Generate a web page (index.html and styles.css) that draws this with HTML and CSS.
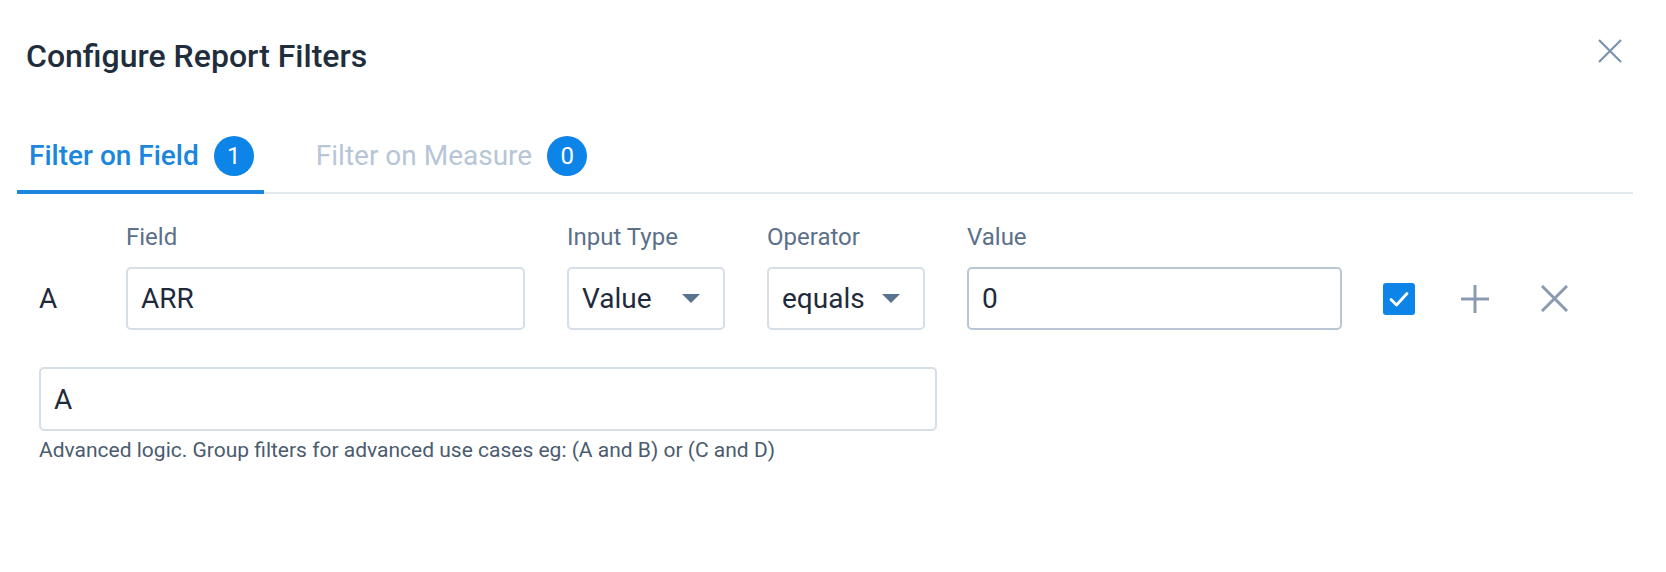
FILE: index.html
```html
<!DOCTYPE html>
<html lang="en">
<head>
<meta charset="utf-8">
<title>Configure Report Filters</title>
<link rel="stylesheet" href="styles.css">
</head>
<body>
<div class="modal">
  <div class="header">
    <h1 class="title">Configure Report Filters</h1>
    <button class="close" aria-label="Close">
      <svg width="24" height="24" viewBox="0 0 24 24"><path d="M1 1 L23 23 M23 1 L1 23" stroke="#7b93af" stroke-width="2.2" fill="none"/></svg>
    </button>
  </div>

  <div class="tabs">
    <div class="tab active">
      <span class="tab-label">Filter on Field</span>
      <span class="badge">1</span>
    </div>
    <div class="tab">
      <span class="tab-label">Filter on Measure</span>
      <span class="badge">0</span>
    </div>
  </div>

  <div class="filters">
    <div class="filter-row">
      <div class="row-letter">A</div>
      <div class="group group-field">
        <label class="label">Field</label>
        <div class="control">ARR</div>
      </div>
      <div class="group group-type">
        <label class="label">Input Type</label>
        <div class="control select">
          <span>Value</span>
          <span class="caret"></span>
        </div>
      </div>
      <div class="group group-op">
        <label class="label">Operator</label>
        <div class="control select">
          <span>equals</span>
          <span class="caret"></span>
        </div>
      </div>
      <div class="group group-value">
        <label class="label">Value</label>
        <div class="control focused">0</div>
      </div>
      <div class="actions">
        <span class="checkbox">
          <svg width="32" height="32" viewBox="0 0 32 32"><path d="M8 16.5 L13.5 22 L24 10.5" stroke="#fff" stroke-width="2.8" fill="none" stroke-linecap="round" stroke-linejoin="round"/></svg>
        </span>
        <span class="icon-btn plus">
          <svg width="28" height="28" viewBox="0 0 28 28"><path d="M14 0 V28 M0 14 H28" stroke="#8a9bb1" stroke-width="3" fill="none"/></svg>
        </span>
        <span class="icon-btn remove">
          <svg width="27" height="27" viewBox="0 0 27 27"><path d="M1 1 L26 26 M26 1 L1 26" stroke="#8a9bb1" stroke-width="3" fill="none"/></svg>
        </span>
      </div>
    </div>

    <div class="logic">
      <div class="control logic-input">A</div>
      <p class="hint">Advanced logic. Group filters for advanced use cases eg: (A and B) or (C and D)</p>
    </div>
  </div>
</div>
</body>
</html>
```

FILE: styles.css
```css
* { box-sizing: border-box; }

html, body {
  margin: 0;
  padding: 0;
  background: #ffffff;
}

body {
  font-family: Roboto, "Noto Sans", "Liberation Sans", sans-serif;
  color: #1f2b3c;
  width: 1666px;
  height: 572px;
  overflow: hidden;
}

.modal {
  padding: 0 33px 0 17px;
}

.header {
  display: flex;
  justify-content: space-between;
  align-items: center;
  height: 110px;
  padding: 2px 0 0 9px;
}

.title {
  margin: 0;
  font-size: 32px;
  font-weight: 500;
  line-height: 38px;
  color: #1f2d3d;
}

.close {
  border: 0;
  background: none;
  padding: 0;
  width: 24px;
  height: 24px;
  margin-right: 11px;
  margin-bottom: 10px;
  display: flex;
  cursor: pointer;
}

.tabs {
  display: flex;
  border-bottom: 2px solid #e2e8f0;
}

.tab {
  display: flex;
  align-items: center;
  gap: 15px;
  padding: 26px 10px 14px 12px;
  margin-bottom: -2px;
  border-bottom: 4px solid transparent;
  font-size: 28px;
  line-height: 40px;
  color: #b6c6d7;
}

.tab + .tab {
  margin-left: 40px;
}

.tab.active {
  color: #1a86e0;
  font-weight: 500;
  border-bottom-color: #1a86e0;
}

.badge {
  width: 40px;
  height: 40px;
  border-radius: 50%;
  background: #0d84e8;
  color: #ffffff;
  font-size: 24px;
  font-weight: 400;
  display: flex;
  align-items: center;
  justify-content: center;
}

.filters {
  padding: 29px 0 0 22px;
}

.filter-row {
  display: flex;
  align-items: flex-end;
}

.row-letter {
  width: 87px;
  height: 63px;
  display: flex;
  align-items: center;
  font-size: 28px;
  color: #1f2b3c;
}

.group {
  display: flex;
  flex-direction: column;
  gap: 16px;
  margin-right: 42px;
}

.label {
  font-size: 24px;
  line-height: 28px;
  color: #5b708a;
}

.control {
  height: 63px;
  border: 2px solid #d6dee8;
  border-radius: 5px;
  padding: 0 14px 0 13px;
  display: flex;
  align-items: center;
  font-size: 28px;
  color: #1f2b3c;
  background: #fff;
}

.control.focused {
  border-color: #b8c6d6;
}

.group-field .control { width: 399px; }
.group-type .control { width: 158px; }
.group-op .control { width: 158px; }
.group-value { margin-right: 41px; }
.group-value .control { width: 375px; }

.select {
  justify-content: space-between;
  padding-right: 23px;
}

.caret {
  width: 0;
  height: 0;
  border-left: 9px solid transparent;
  border-right: 9px solid transparent;
  border-top: 9px solid #5a7391;
}

.actions {
  height: 63px;
  display: flex;
  align-items: center;
}

.checkbox {
  width: 32px;
  height: 32px;
  border-radius: 3px;
  background: #0d84e8;
  display: flex;
}

.icon-btn {
  display: flex;
}

.plus {
  margin-left: 46px;
}

.remove {
  margin-left: 52px;
}

.logic {
  margin-top: 37px;
}

.logic-input {
  width: 898px;
  height: 64px;
}

.hint {
  margin: 6px 0 0;
  font-size: 21px;
  line-height: 26px;
  color: #4b5b6f;
}
```
